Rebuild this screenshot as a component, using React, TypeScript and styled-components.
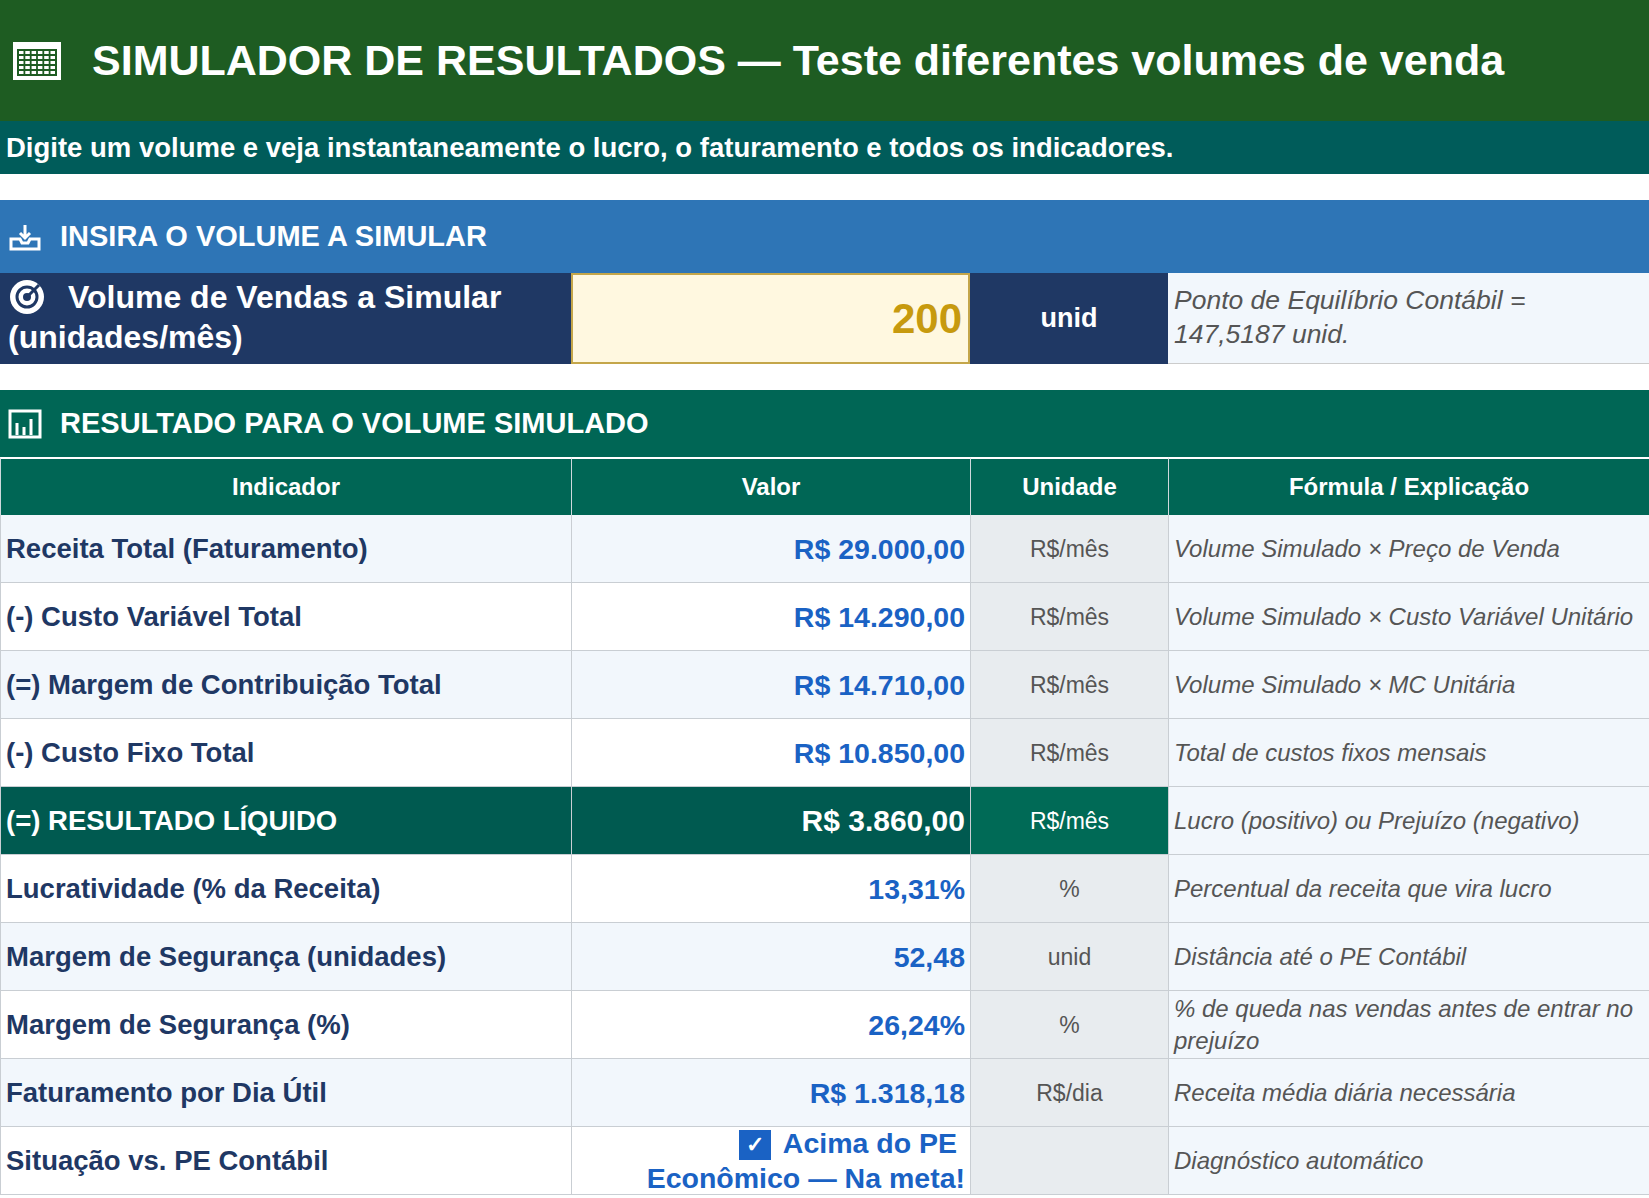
import React from "react";
import styled, { createGlobalStyle } from "styled-components";

const G = createGlobalStyle`
  *, *::before, *::after { box-sizing: border-box; }
  body { margin: 0; background: #fff; font-family: "Liberation Sans", Arial, sans-serif; }
`;
const Page = styled.div`width: 1649px; display: flex; flex-direction: column;`;
const TitleBar = styled.div`
  height: 121px; background: #1e5c22; color: #fff; display: flex; align-items: center;
  gap: 30px; padding-left: 12px; font-size: 43px; font-weight: bold;
`;
const Sub = styled.div`
  height: 53px; background: #005c5a; color: #fff; font-size: 27.5px; font-weight: bold;
  display: flex; align-items: center; padding-left: 6px;
`;
const Section = styled.div<{ $bg: string; $h: number; $mt: number }>`
  margin-top: ${p => p.$mt}px; height: ${p => p.$h}px; background: ${p => p.$bg}; color: #fff;
  font-size: 29px; font-weight: bold; display: flex; align-items: center; gap: 18px; padding-left: 8px;
`;
const InputRow = styled.div`
  display: grid; grid-template-columns: 571px 399px 198px 1fr; height: 91px;
`;
const InLabel = styled.div`
  background: #1f3864; color: #fff; font-size: 32px; font-weight: bold; line-height: 40px;
  padding: 4px 0 0 8px; display: flex; flex-direction: column;
`;
const LabelLine = styled.span`display: flex; align-items: center; gap: 22px;`;
const InVal = styled.div`
  background: #fff8e0; border: 2px solid #c4a64a; color: #c79a0e; font-size: 42px; font-weight: bold;
  display: flex; align-items: center; justify-content: flex-end; padding-right: 6px;
`;
const InUnit = styled.div`
  background: #1f3864; color: #fff; font-size: 27px; font-weight: bold;
  display: flex; align-items: center; justify-content: center;
`;
const InNote = styled.div`
  background: #f2f7fc; color: #555; font-size: 26.5px; font-style: italic; line-height: 34px;
  padding: 10px 6px; border-bottom: 1px solid #ccc;
`;
const Table = styled.div`
  display: grid; grid-template-columns: 571px 399px 198px 1fr; grid-template-rows: 58px; grid-auto-rows: 68px;
`;
const Head = styled.div`
  background: #006655; color: #fff; font-size: 24px; font-weight: bold;
  display: flex; align-items: center; justify-content: center; border-top: 2px solid #fff; border-left: 1px solid #cfd8dc;
`;
const Cell = styled.div<{ $bg: string; $align?: string; $color: string; $size: number; $bold?: boolean; $italic?: boolean }>`
  background: ${p => p.$bg}; color: ${p => p.$color}; font-size: ${p => p.$size}px;
  font-weight: ${p => (p.$bold ? "bold" : "normal")}; font-style: ${p => (p.$italic ? "italic" : "normal")};
  display: flex; align-items: center; justify-content: ${p => p.$align || "flex-start"};
  text-align: ${p => (p.$align === "flex-end" ? "right" : "left")};
  padding: 0 5px; border-bottom: 1px solid #c9ced3; border-left: 1px solid #c9ced3; line-height: 32px;
  overflow: hidden;
`;
const Situation = styled.span`line-height: 35px; white-space: nowrap;`;
const Check = styled.span`
  display: inline-flex; width: 32px; height: 30px; background: #1a62c4; color: #fff; font-size: 22px;
  align-items: center; justify-content: center; margin-right: 12px; vertical-align: middle;
`;

const rows: [string, string, string, string][] = [
  ["Receita Total (Faturamento)", "R$ 29.000,00", "R$/mês", "Volume Simulado × Preço de Venda"],
  ["(-) Custo Variável Total", "R$ 14.290,00", "R$/mês", "Volume Simulado × Custo Variável Unitário"],
  ["(=) Margem de Contribuição Total", "R$ 14.710,00", "R$/mês", "Volume Simulado × MC Unitária"],
  ["(-) Custo Fixo Total", "R$ 10.850,00", "R$/mês", "Total de custos fixos mensais"],
  ["(=) RESULTADO LÍQUIDO", "R$ 3.860,00", "R$/mês", "Lucro (positivo) ou Prejuízo (negativo)"],
  ["Lucratividade (% da Receita)", "13,31%", "%", "Percentual da receita que vira lucro"],
  ["Margem de Segurança (unidades)", "52,48", "unid", "Distância até o PE Contábil"],
  ["Margem de Segurança (%)", "26,24%", "%", "% de queda nas vendas antes de entrar no prejuízo"],
  ["Faturamento por Dia Útil", "R$ 1.318,18", "R$/dia", "Receita média diária necessária"],
  ["Situação vs. PE Contábil", "", "", "Diagnóstico automático"],
];

const CalcIcon = () => (
  <svg width="50" height="40" viewBox="0 0 50 40">
    <rect x="1.5" y="1.5" width="47" height="37" fill="#fff" stroke="#fff" />
    <rect x="5" y="8" width="40" height="27" fill="#1e5c22" />
    {[0, 1, 2, 3, 4].map(r => [0, 1, 2, 3, 4, 5].map(c => (
      <rect key={r + "-" + c} x={7 + c * 6.3} y={10 + r * 5} width="4.5" height="3" fill="#fff" />
    )))}
  </svg>
);
const TrayIcon = () => (
  <svg width="34" height="30" viewBox="0 0 34 30" fill="none" stroke="#fff" strokeWidth="3">
    <path d="M3 17v10h28V17h-9l-2 4h-6l-2-4z" />
    <path d="M17 3v13M12 11l5 5 5-5" />
  </svg>
);
const TargetIcon = () => (
  <svg width="38" height="38" viewBox="0 0 38 38">
    <circle cx="19" cy="19" r="17" fill="#fff" />
    <circle cx="19" cy="19" r="10" fill="none" stroke="#1f3864" strokeWidth="3" />
    <circle cx="19" cy="19" r="4" fill="#1f3864" />
    <path d="M19 19L31 7" stroke="#1f3864" strokeWidth="3" />
  </svg>
);
const ChartIcon = () => (
  <svg width="34" height="30" viewBox="0 0 34 30" fill="none" stroke="#fff" strokeWidth="3">
    <rect x="2" y="2" width="30" height="26" />
    <path d="M9 26V14M16 26V18M23 26V10" />
  </svg>
);

export default function App() {
  return (
    <Page>
      <G />
      <TitleBar><CalcIcon />SIMULADOR DE RESULTADOS — Teste diferentes volumes de venda</TitleBar>
      <Sub>Digite um volume e veja instantaneamente o lucro, o faturamento e todos os indicadores.</Sub>
      <Section $bg="#2e75b6" $h={73} $mt={26}><TrayIcon />INSIRA O VOLUME A SIMULAR</Section>
      <InputRow>
        <InLabel>
          <LabelLine><TargetIcon />Volume de Vendas a Simular</LabelLine>
          <span>(unidades/mês)</span>
        </InLabel>
        <InVal>200</InVal>
        <InUnit>unid</InUnit>
        <InNote>Ponto de Equilíbrio Contábil =<br />147,5187 unid.</InNote>
      </InputRow>
      <Section $bg="#006655" $h={67} $mt={26}><ChartIcon />RESULTADO PARA O VOLUME SIMULADO</Section>
      <Table>
        <Head>Indicador</Head><Head>Valor</Head><Head>Unidade</Head><Head>Fórmula / Explicação</Head>
        {rows.map((r, i) => {
          const hl = i === 4;
          const bg = i % 2 === 0 ? "#f2f7fc" : "#ffffff";
          return (
            <React.Fragment key={i}>
              <Cell $bg={hl ? "#005a50" : bg} $color={hl ? "#fff" : "#1f3864"} $size={27.5} $bold>{r[0]}</Cell>
              <Cell $bg={hl ? "#005a50" : bg} $color={hl ? "#fff" : "#1a62c4"} $size={hl ? 30 : 28.5} $bold $align="flex-end">
                {i === 9 ? (
                  <Situation><Check>✓</Check>Acima do PE&nbsp;<br />Econômico — Na meta!</Situation>
                ) : r[1]}
              </Cell>
              <Cell $bg={hl ? "#006a56" : "#e8ecef"} $color={hl ? "#fff" : "#555"} $size={23} $align="center">{r[2]}</Cell>
              <Cell $bg="#f2f7fc" $color="#555" $size={24} $italic>{r[3]}</Cell>
            </React.Fragment>
          );
        })}
      </Table>
    </Page>
  );
}
